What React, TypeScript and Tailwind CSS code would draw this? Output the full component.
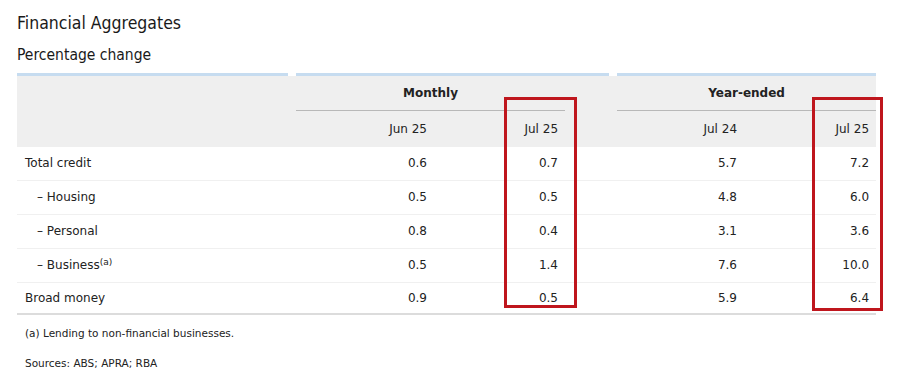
const rows = [
  { label: 'Total credit', indent: false, sup: false, v: ['0.6', '0.7', '5.7', '7.2'] },
  { label: 'Housing', indent: true, sup: false, v: ['0.5', '0.5', '4.8', '6.0'] },
  { label: 'Personal', indent: true, sup: false, v: ['0.8', '0.4', '3.1', '3.6'] },
  { label: 'Business', indent: true, sup: true, v: ['0.5', '1.4', '7.6', '10.0'] },
  { label: 'Broad money', indent: false, sup: false, v: ['0.9', '0.5', '5.9', '6.4'] },
];

const App = () => {
  return (
    <div className="relative w-[900px] h-[374px] bg-white text-[#222] font-['DejaVu_Sans',sans-serif] overflow-hidden">
      <div className="pl-[17px] pt-[12px]">
        <h1 className="font-['DejaVu_Sans_Condensed','DejaVu_Sans',sans-serif] text-[17.5px] leading-[22px] text-[#1a1a1a]">
          Financial Aggregates
        </h1>
        <h2 className="mt-[11px] font-['DejaVu_Sans_Condensed','DejaVu_Sans',sans-serif] text-[15.5px] leading-[20px] text-[#1a1a1a]">
          Percentage change
        </h2>

        {/* blue bars above each column group */}
        <div className="mt-[8px] flex gap-2 w-[859px]">
          <div className="h-[3px] w-[271px] bg-[#c6dcf0]" />
          <div className="h-[3px] w-[313px] bg-[#c6dcf0]" />
          <div className="h-[3px] flex-1 bg-[#c6dcf0]" />
        </div>

        <table className="w-[859px] table-fixed border-collapse text-[12px]">
          <colgroup>
            <col className="w-[279px]" />
            <col className="w-[138px]" />
            <col className="w-[131px]" />
            <col className="w-[52px]" />
            <col className="w-[127px]" />
            <col className="w-[132px]" />
          </colgroup>
          <thead className="bg-[#efefef]">
            <tr className="h-[34px]">
              <th />
              <th colSpan={2} className="border-b border-[#b8b8b8] text-center font-bold align-middle">
                Monthly
              </th>
              <th />
              <th colSpan={2} className="border-b border-[#b8b8b8] text-center font-bold align-middle">
                Year-ended
              </th>
            </tr>
            <tr className="h-[37px]">
              <th />
              <th className="pr-[7px] text-right font-normal">Jun 25</th>
              <th className="pr-[7px] text-right font-normal">Jul 25</th>
              <th />
              <th className="pr-[7px] text-right font-normal">Jul 24</th>
              <th className="pr-[7px] text-right font-normal">Jul 25</th>
            </tr>
          </thead>
          <tbody>
            {rows.map((r, i) => (
              <tr
                key={r.label}
                className={
                  i === rows.length - 1
                    ? 'h-[32px] border-b-[2px] border-[#dcdcdc]'
                    : i === 0
                      ? 'h-[33px] border-b border-[#f0f0f0]'
                      : 'h-[34px] border-b border-[#f0f0f0]'
                }
              >
                <td className={r.indent ? 'pl-[20px]' : 'pl-[8px]'}>
                  {r.indent && '– '}
                  {r.label}
                  {r.sup && <sup className="text-[9px]">(a)</sup>}
                </td>
                <td className="pr-[7px] text-right">{r.v[0]}</td>
                <td className="pr-[7px] text-right">{r.v[1]}</td>
                <td />
                <td className="pr-[7px] text-right">{r.v[2]}</td>
                <td className="pr-[7px] text-right">{r.v[3]}</td>
              </tr>
            ))}
          </tbody>
        </table>

        <p className="mt-[11px] pl-[8px] text-[10.5px] leading-[14px]">(a) Lending to non-financial businesses.</p>
        <p className="mt-[16px] pl-[8px] text-[10.5px] leading-[14px]">Sources: ABS; APRA; RBA</p>
      </div>

      {/* red highlight boxes */}
      <div className="absolute left-[504px] top-[97px] w-[73px] h-[211px] border-[3px] border-[#bf161d]" />
      <div className="absolute left-[812px] top-[97px] w-[71px] h-[214px] border-[3px] border-[#bf161d]" />
    </div>
  );
};

export default App;
